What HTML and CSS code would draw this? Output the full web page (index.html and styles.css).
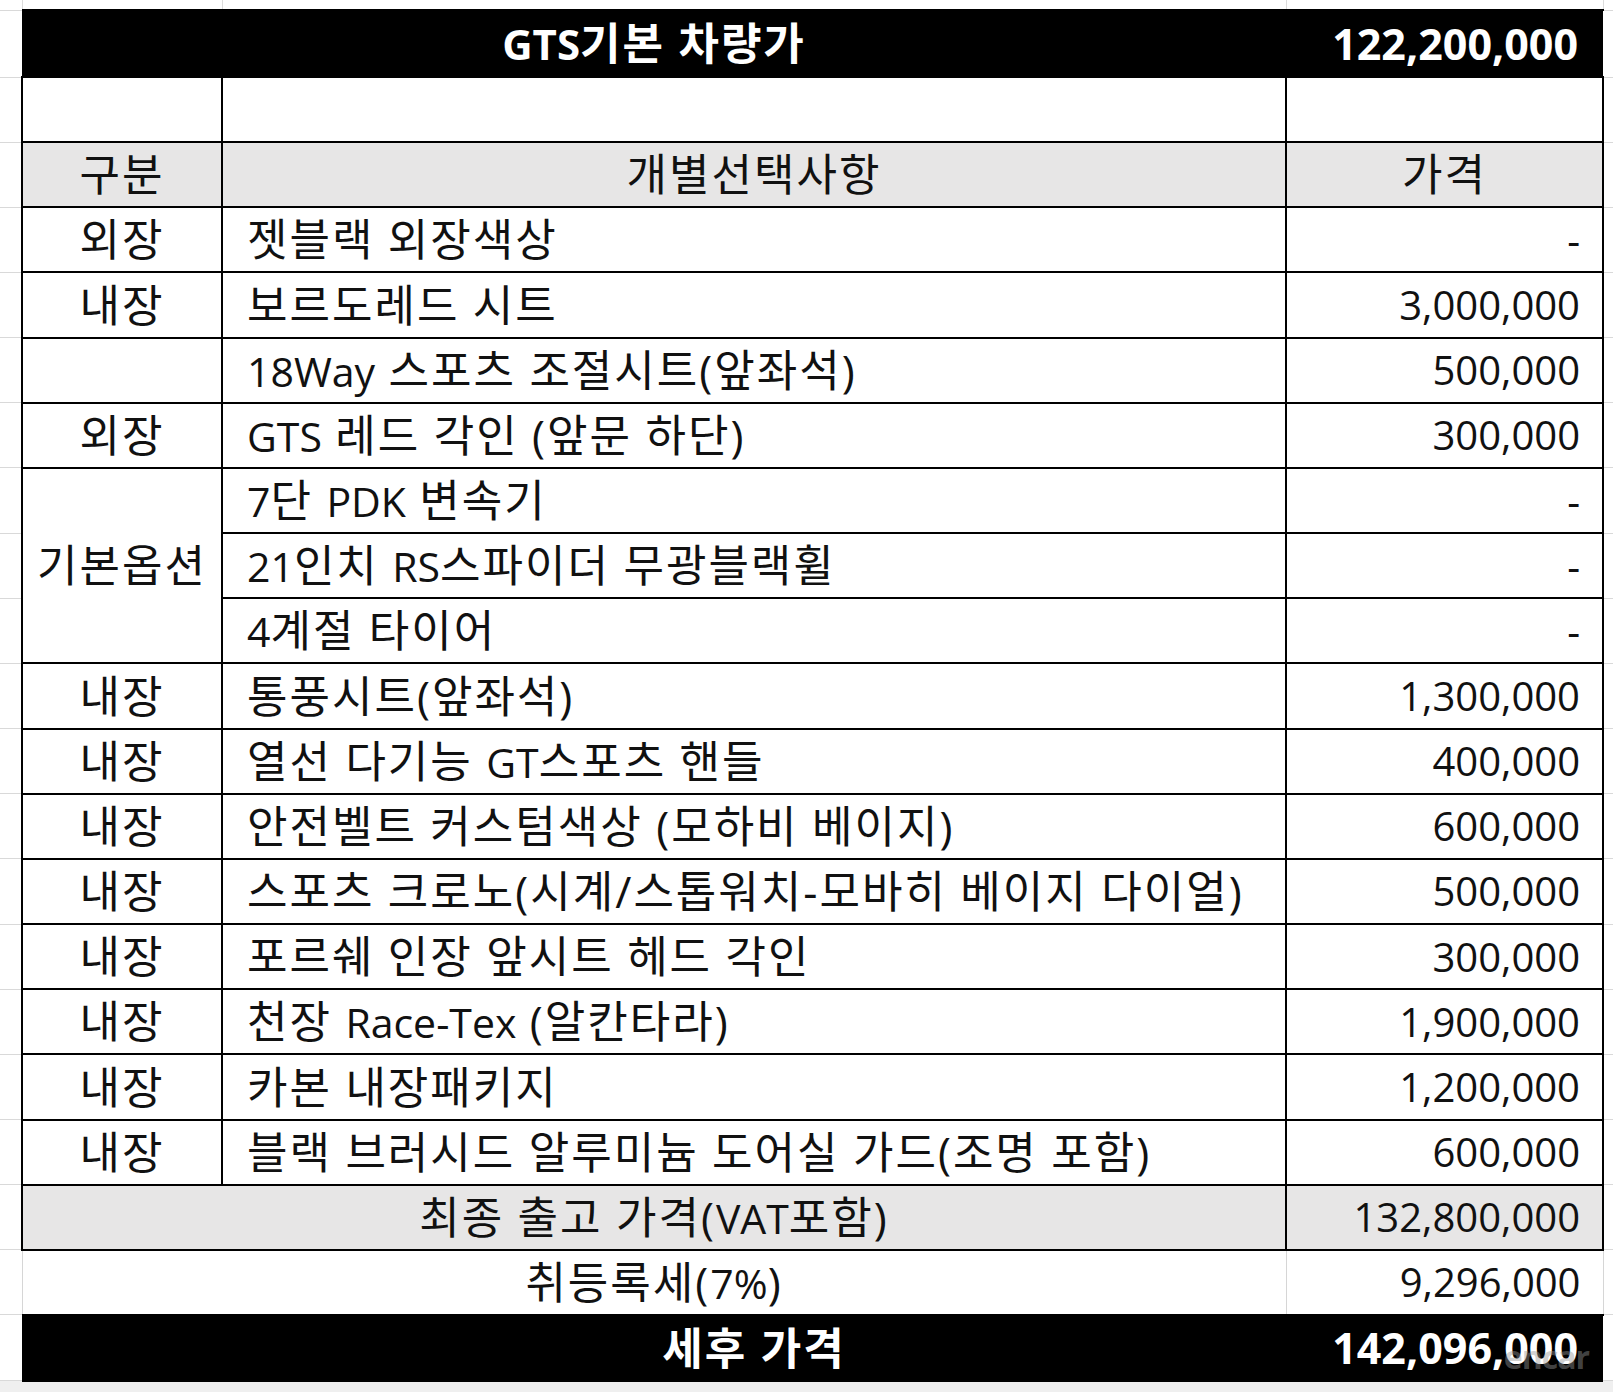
FILE: index.html
```html
<!DOCTYPE html>
<html lang="ko">
<head>
<meta charset="utf-8">
<title>GTS 견적</title>
<link rel="stylesheet" href="styles.css">
</head>
<body>
<div class="sheet">
<table class="quote">
  <colgroup>
    <col class="c-gut-l">
    <col class="c-cat">
    <col class="c-item">
    <col class="c-price">
    <col class="c-gut-r">
  </colgroup>
  <tr class="r-top">
    <td class="gut"></td><td class="gtop"></td><td class="gtop"></td><td class="gtop"></td><td class="gut"></td>
  </tr>
  <tr class="r-head black">
    <td class="gut"></td>
    <td colspan="2" class="center bold"><span class="en">GTS</span>기본 차량가</td>
    <td class="num bold big">122,200,000</td>
    <td class="gut"></td>
  </tr>
  <tr class="row">
    <td class="gut"></td><td class="b"></td><td class="b"></td><td class="b"></td><td class="gut"></td>
  </tr>
  <tr class="row gray">
    <td class="gut"></td>
    <td class="b center">구분</td>
    <td class="b center">개별선택사항</td>
    <td class="b center">가격</td>
    <td class="gut"></td>
  </tr>
  <tr class="row">
    <td class="gut"></td><td class="b center">외장</td><td class="b item">젯블랙 외장색상</td><td class="b num">-</td><td class="gut"></td>
  </tr>
  <tr class="row">
    <td class="gut"></td><td class="b center">내장</td><td class="b item">보르도레드 시트</td><td class="b num">3,000,000</td><td class="gut"></td>
  </tr>
  <tr class="row">
    <td class="gut"></td><td class="b center"></td><td class="b item"><span class="en">18Way</span> 스포츠 조절시트(앞좌석)</td><td class="b num">500,000</td><td class="gut"></td>
  </tr>
  <tr class="row">
    <td class="gut"></td><td class="b center">외장</td><td class="b item"><span class="en">GTS</span> 레드 각인 (앞문 하단)</td><td class="b num">300,000</td><td class="gut"></td>
  </tr>
  <tr class="row">
    <td class="gut"></td><td class="b center" rowspan="3">기본옵션</td><td class="b item"><span class="en">7</span>단 <span class="en">PDK</span> 변속기</td><td class="b num">-</td><td class="gut"></td>
  </tr>
  <tr class="row">
    <td class="gut"></td><td class="b item"><span class="en">21</span>인치 <span class="en">RS</span>스파이더 무광블랙휠</td><td class="b num">-</td><td class="gut"></td>
  </tr>
  <tr class="row">
    <td class="gut"></td><td class="b item"><span class="en">4</span>계절 타이어</td><td class="b num">-</td><td class="gut"></td>
  </tr>
  <tr class="row">
    <td class="gut"></td><td class="b center">내장</td><td class="b item">통풍시트(앞좌석)</td><td class="b num">1,300,000</td><td class="gut"></td>
  </tr>
  <tr class="row">
    <td class="gut"></td><td class="b center">내장</td><td class="b item">열선 다기능 <span class="en">GT</span>스포츠 핸들</td><td class="b num">400,000</td><td class="gut"></td>
  </tr>
  <tr class="row">
    <td class="gut"></td><td class="b center">내장</td><td class="b item">안전벨트 커스텀색상 (모하비 베이지)</td><td class="b num">600,000</td><td class="gut"></td>
  </tr>
  <tr class="row">
    <td class="gut"></td><td class="b center">내장</td><td class="b item">스포츠 크로노(시계/스톱워치-모바히 베이지 다이얼)</td><td class="b num">500,000</td><td class="gut"></td>
  </tr>
  <tr class="row">
    <td class="gut"></td><td class="b center">내장</td><td class="b item">포르쉐 인장 앞시트 헤드 각인</td><td class="b num">300,000</td><td class="gut"></td>
  </tr>
  <tr class="row">
    <td class="gut"></td><td class="b center">내장</td><td class="b item">천장 <span class="en">Race-Tex</span> (알칸타라)</td><td class="b num">1,900,000</td><td class="gut"></td>
  </tr>
  <tr class="row">
    <td class="gut"></td><td class="b center">내장</td><td class="b item">카본 내장패키지</td><td class="b num">1,200,000</td><td class="gut"></td>
  </tr>
  <tr class="row">
    <td class="gut"></td><td class="b center">내장</td><td class="b item">블랙 브러시드 알루미늄 도어실 가드(조명 포함)</td><td class="b num">600,000</td><td class="gut"></td>
  </tr>
  <tr class="row gray">
    <td class="gut"></td><td class="b center" colspan="2">최종 출고 가격(<span class="en">VAT</span>포함)</td><td class="b num">132,800,000</td><td class="gut"></td>
  </tr>
  <tr class="row plain">
    <td class="gut"></td><td class="thin center" colspan="2">취등록세(<span class="en">7%</span>)</td><td class="thin num">9,296,000</td><td class="gut"></td>
  </tr>
  <tr class="r-foot black">
    <td class="gut"></td>
    <td></td>
    <td class="center bold">세후 가격</td>
    <td class="num bold big last">142,096,000<span class="mark">encar</span></td>
    <td class="gut"></td>
  </tr>
  <tr class="r-bottom">
    <td class="gbot"></td><td class="gbot"></td><td class="gbot"></td><td class="gbot"></td><td class="gbot"></td>
  </tr>
</table>
</div>
</body>
</html>
```

FILE: styles.css
```css
html, body {
  margin: 0;
  padding: 0;
  background: #ffffff;
}

.sheet {
  width: 1613px;
  height: 1392px;
  overflow: hidden;
}

.quote {
  border-collapse: collapse;
  table-layout: fixed;
  width: 1613px;
  font-family: "Open Sans", "Noto Sans CJK KR", sans-serif;
  color: #111;
  font-size: 44px;
  letter-spacing: 2px;
  line-height: 1.2;
}

.c-gut-l { width: 22px; }
.c-cat { width: 200px; }
.c-item { width: 1064px; }
.c-price { width: 317px; }
.c-gut-r { width: 10px; }

.quote td {
  padding: 0;
  vertical-align: middle;
  white-space: nowrap;
  overflow: visible;
}

.r-top { height: 10px; }
.r-head { height: 67px; }
.row { height: 65.16px; }
.r-foot { height: 66px; }
.r-bottom { height: 11px; }

.gut {
  border-bottom: 1px solid #d9d9d9;
}

.gtop {
  border-left: 1px solid #dcdcdc;
  border-right: 1px solid #dcdcdc;
}

.gbot {
  background: #efefef;
}

.b {
  border: 2px solid #000;
}

.thin {
  border: 1px solid #d6d6d6;
}

.black td:not(.gut) {
  background: #000;
  color: #fff;
  border-top: 2px solid #000;
  border-bottom: 2px solid #000;
}

.gray .b {
  background: #e7e6e6;
}

.center {
  text-align: center;
}

.item {
  text-align: left;
  padding-left: 24px !important;
}

.en {
  font-size: 41px;
  letter-spacing: 0;
}

.num {
  text-align: right;
  padding-right: 22px !important;
  font-size: 40px;
  letter-spacing: 0;
}

.bold {
  font-weight: 700;
}

.bold .en {
  font-size: 42px;
}

.big {
  font-size: 43px;
  padding-right: 25px !important;
}

.last {
  position: relative;
}

.mark {
  position: absolute;
  right: 14px;
  top: 22px;
  font-family: "Open Sans", sans-serif;
  font-weight: 700;
  font-size: 32px;
  letter-spacing: -1px;
  color: rgba(150, 150, 150, 0.45);
}
```
